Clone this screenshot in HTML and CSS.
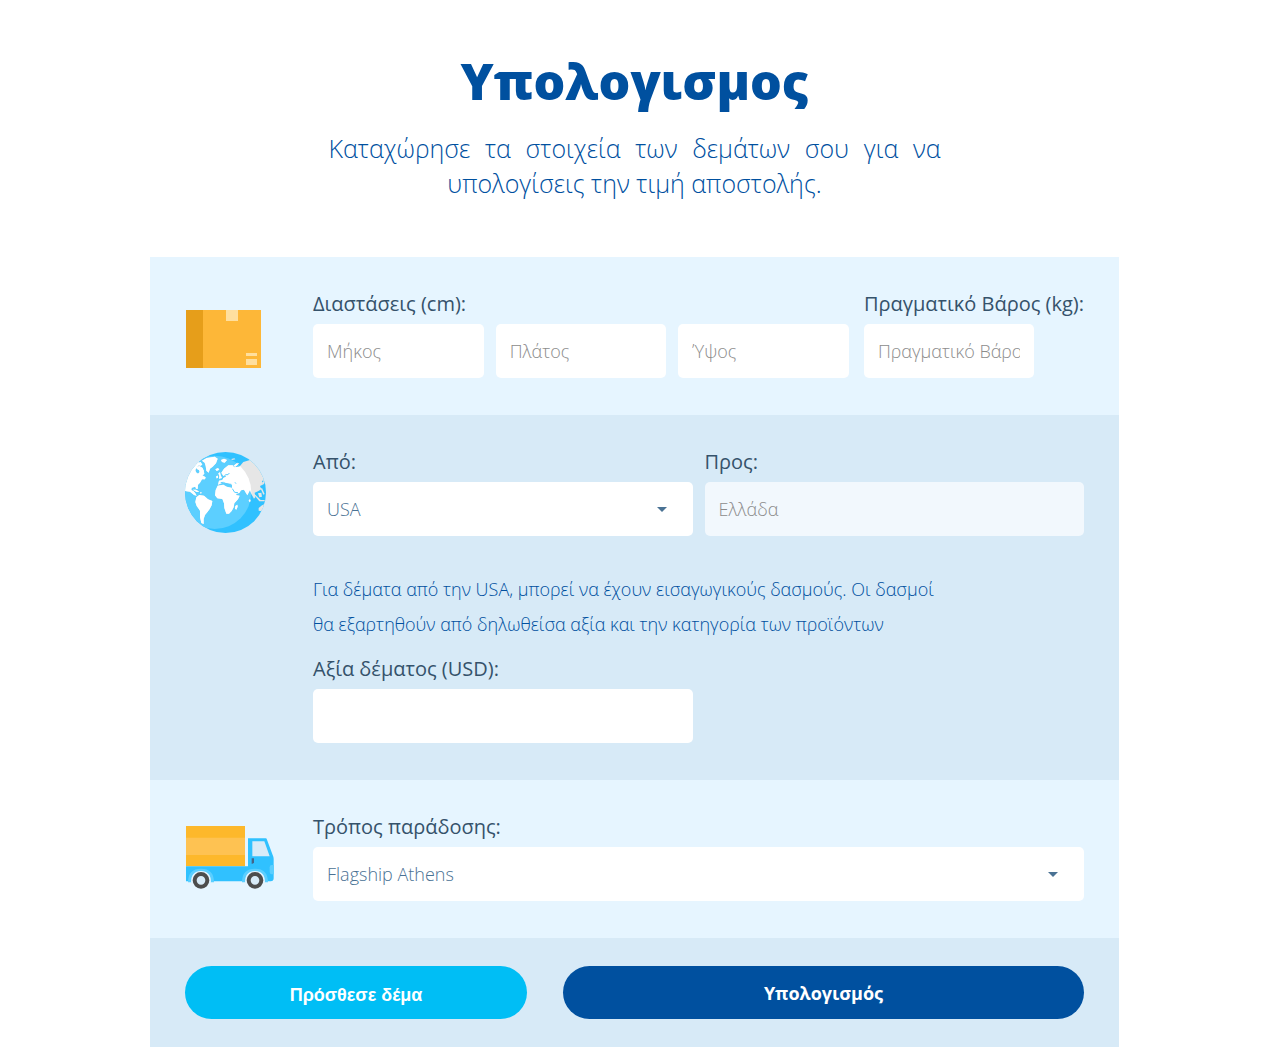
FILE: index.html
```
<!DOCTYPE html>
<html lang="el">
    <head>
        <meta charset="utf-8">
        <meta name="viewport" content="width=device-width, initial-scale=1">
        <title>Υπολογισμος</title>
        <link rel="stylesheet" href="styles.css">
    </head>
    <body>
        <div class="header">
            <h1>Υπολογισμος</h1>
            <p>Καταχώρησε τα στοιχεία των δεμάτων σου για να υπολογίσεις την τιμή αποστολής.</p>
        </div>

        <form class="calculator">
            <!-- package -->
            <div class="section light">
                <div class="icon icon-box">
                    <svg width="76" height="58" viewBox="-1 0 76 58" aria-hidden="true">
                        <rect width="75" height="58" fill="#fdb738"/>
                        <rect width="17" height="58" fill="#e69e1a"/>
                        <rect x="40" width="12" height="11" fill="#ffdf9e"/>
                        <rect x="60" y="43" width="11" height="3" fill="#ffdf9e"/>
                        <rect x="60" y="49" width="11" height="6" fill="#ffdf9e"/>
                    </svg>
                </div>
                <div class="content row package">
                    <div class="dimensions">
                        <label for="length">Διαστάσεις (cm):</label>
                        <div class="row sizes">
                            <input type="text" id="length" placeholder="Μήκος">
                            <input type="text" aria-label="Πλάτος" placeholder="Πλάτος">
                            <input type="text" aria-label="Ύψος" placeholder="Ύψος">
                        </div>
                    </div>
                    <div class="weight">
                        <label for="weight">Πραγματικό Βάρος (kg):</label>
                        <input type="text" id="weight" placeholder="Πραγματικό Βάρος">
                    </div>
                </div>
            </div>

            <!-- countries -->
            <div class="section dark">
                <div class="icon icon-globe">
                    <svg width="81" height="81" viewBox="45 36 243 243" aria-hidden="true">
                        <defs>
                            <clipPath id="globe"><circle cx="166.500" cy="157.500" r="121.500"/></clipPath>
                            <clipPath id="day"><circle cx="134" cy="157" r="110"/></clipPath>
                            <g id="land">
                                <!-- americas -->
                                <path d="M40 152V88L66 66L84 64L90 72L82 80L76 90L78 97L84 101L89 96L86 86L92 80L101 90L103 102L97 106L107 112L105 118L96 118L90 128L84 134L83 147L78 146L76 140L65 143L64 150L71 154L76 160L80 167L72 165L60 155Z"/>
                                <path d="M79 172L88 165L102 167L114 178L127 183L125 196L119 207L113 215L105 225L101 237L101 252L94 249L90 232L90 212L80 198L76 186Z"/>
                                <path d="M68 149L78 149L88 155L80 156ZM90 156L96 158L92 161Z"/>
                                <!-- greenland and the islands -->
                                <path d="M96 62L110 54L134 50L143 56L138 70L128 80L120 86L116 98L109 92L107 78L104 68Z"/>
                                <path d="M82 70L92 66L97 74L90 78ZM78 82L88 78L98 84L100 94L92 92L82 88Z"/>
                                <path d="M136 88L144 84L148 89L140 93ZM153 60L162 56L171 60L164 68L156 66ZM184 57L193 55L196 58L186 60ZM190 78L202 68L208 70L196 80Z"/>
                                <path d="M145 100L150 97L152 106L156 114L147 116L148 108ZM139 108L144 107L144 114L139 115Z"/>
                                <!-- europe and asia -->
                                <path d="M144 134L147 122L157 120L160 114L168 110L166 104L160 108L154 98L162 86L175 76L188 76L192 82L208 80L220 66L240 60L300 60V122H276L278 134L270 138L274 148L264 154L254 158L256 172L252 176L244 162L240 150L232 166L222 149L213 151L208 159L196 162L186 144V134L174 130L166 128L156 129Z"/>
                                <!-- africa -->
                                <path d="M143 137L160 134L170 140L187 144L193 154L200 166L209 167L204 178L193 190L191 202L185 213L177 221L169 221L163 204L162 190L157 177L142 175L135 166L137 150Z"/>
                                <!-- madagascar, indonesia, australia -->
                                <path d="M196 198L202 194L203 200L199 209L195 206ZM236 181L240 178L243 183L239 187ZM250 162L256 164L272 180L284 180V184L268 184ZM264 160L274 158L276 170L268 172ZM276 128L282 122L284 128L278 136ZM272 146L276 144L284 162L280 164Z"/>
                                <path d="M290 190V220L276 214L266 212L266 204L276 196Z"/>
                            </g>
                        </defs>
                        <g clip-path="url(#globe)">
                            <rect x="45" y="36" width="243" height="243" fill="#30c1ff"/>
                            <circle cx="134" cy="157" r="110" fill="#5ccfff"/>
                            <use href="#land" fill="#e6e6e6"/>
                            <use href="#land" fill="#fff" clip-path="url(#day)"/>
                            <path fill="none" stroke="#5ccfff" stroke-width="3" d="M152 128L160 127L170 132L184 133M187 146L194 157L204 158M195 127L198 131M166 104L174 104L178 99"/>
                        </g>
                    </svg>
                </div>
                <div class="content">
                    <div class="row countries">
                        <div>
                            <label for="from">Από:</label>
                            <div class="select">
                                <select id="from">
                                    <option>USA</option>
                                </select>
                            </div>
                        </div>
                        <div>
                            <label for="to">Προς:</label>
                            <input type="text" id="to" placeholder="Ελλάδα" disabled>
                        </div>
                    </div>
                    <p class="note">Για δέματα από την USA, μπορεί να έχουν εισαγωγικούς δασμούς. Οι δασμοί θα εξαρτηθούν από δηλωθείσα αξία και την κατηγορία των προϊόντων</p>
                    <div class="row countries">
                        <div>
                            <label for="value">Αξία δέματος (USD):</label>
                            <input type="text" id="value">
                        </div>
                        <div></div>
                    </div>
                </div>
            </div>

            <!-- delivery -->
            <div class="section light">
                <div class="icon icon-truck">
                    <svg width="89" height="63" viewBox="45 33 267 189" aria-hidden="true">
                        <path fill="#fdb82b" d="M48 33h177v121H48z"/>
                        <path fill="#fec252" d="M48 68h177v52H48z"/>
                        <path fill="#30c1ff" d="M234 70h53q3 0 4 4l17 46q3 6 3 12v58q0 9-9 9H48v-45h186z"/>
                        <path fill="#d8ebf8" d="M247 79h36l16 45h-52z"/>
                        <path fill="#45658a" d="M245 130h7v12q0 4-7 5z"/>
                        <path fill="#5ccfff" d="M312 150v28h-7q-6 0-6-7v-14q0-7 6-7z"/>
                        <path fill="#5ccfff" d="M54 202q0-41 39-41t39 41zM216 202q0-41 39-41t39 41z"/>
                        <path fill="#e6f5ff" d="M63 203q0-35 30-35t30 35zM225 203q0-35 30-35t30 35z"/>
                        <circle cx="93" cy="196" r="19" fill="#d8ebf8" stroke="#4d4d4d" stroke-width="12"/>
                        <circle cx="255" cy="196" r="19" fill="#d8ebf8" stroke="#4d4d4d" stroke-width="12"/>
                    </svg>
                </div>
                <div class="content">
                    <label for="delivery">Τρόπος παράδοσης:</label>
                    <div class="select">
                        <select id="delivery">
                            <option>Flagship Athens</option>
                        </select>
                    </div>
                </div>
            </div>

            <div class="buttons dark">
                <button type="button" class="add">Πρόσθεσε δέμα</button>
                <button type="button" class="calculate">Υπολογισμός</button>
            </div>
        </form>
    </body>
</html>
```
FILE: styles.css
```
*{
    margin:0;
    padding:0;
    box-sizing:border-box;
}
body{
    padding-right:3px;
    background:#fff;
    color:#35526b;
    font-family:"Open Sans", sans-serif;
}
.header{
    max-width:612px;
    margin:0 auto;
    padding:46px 0 56px;
    color:#00509f;
}
.header h1{
    margin-bottom:15px;
    font-size:50px;
    font-weight:800;
    line-height:70px;
    text-align:center;
}
.header p{
    font-size:25px;
    font-weight:300;
    line-height:35px;
    text-align:justify;
    text-align-last:center;
}
.calculator{
    max-width:969px;
    margin:0 auto;
}
.light{
    background:#e6f5ff;
}
.dark{
    background:#d7eaf7;
}
.section{
    display:flex;
    padding:33px 35px 37px;
}
.icon{
    flex:0 0 128px;
}
.icon svg{
    display:block;
}
.icon-box{
    padding-top:20px;
}
.icon-globe{
    padding-top:4px;
}
.icon-truck{
    padding-top:13px;
}
.content{
    flex:1;
    min-width:0;
}
.row{
    display:flex;
    gap:12px;
}
.package{
    gap:15px;
}
.dimensions{
    flex:1;
}
.weight input{
    width:170px;
}
.countries > div{
    flex:1;
}
label{
    display:block;
    margin-bottom:7px;
    font-size:20px;
    line-height:27px;
}
input,
select{
    display:block;
    width:100%;
    min-width:0;
    height:54px;
    padding:0 14px;
    border:none;
    border-radius:5px;
    background:#fff;
    color:#4a7294;
    font-family:"Open Sans", sans-serif;
    font-size:18px;
    font-weight:300;
}
input::placeholder{
    color:#8c8c8c;
}
input:disabled{
    background:#f2f8fd;
}
select{
    appearance:none;
    -webkit-appearance:none;
}
.select{
    position:relative;
}
/* drop-down arrow */
.select:after{
    content:'';
    position:absolute;
    top:25px;
    right:26px;
    border:5px solid transparent;
    border-top-color:#4a7294;
    border-bottom:none;
    pointer-events:none;
}
.note{
    max-width:640px;
    margin:36px 0 13px;
    color:#00509f;
    font-size:18px;
    font-weight:300;
    line-height:35px;
}
.buttons{
    display:flex;
    gap:36px;
    padding:28px 35px;
}
button{
    height:53px;
    border:none;
    border-radius:27px;
    color:#fff;
    font-size:18px;
    font-weight:700;
    cursor:pointer;
}
.add{
    flex:342;
    padding-top:5px;
    background:#00bef5;
    font-family:"Liberation Sans", sans-serif;
}
.calculate{
    flex:521;
    background:#00509f;
    font-family:"Open Sans", sans-serif;
}
```
